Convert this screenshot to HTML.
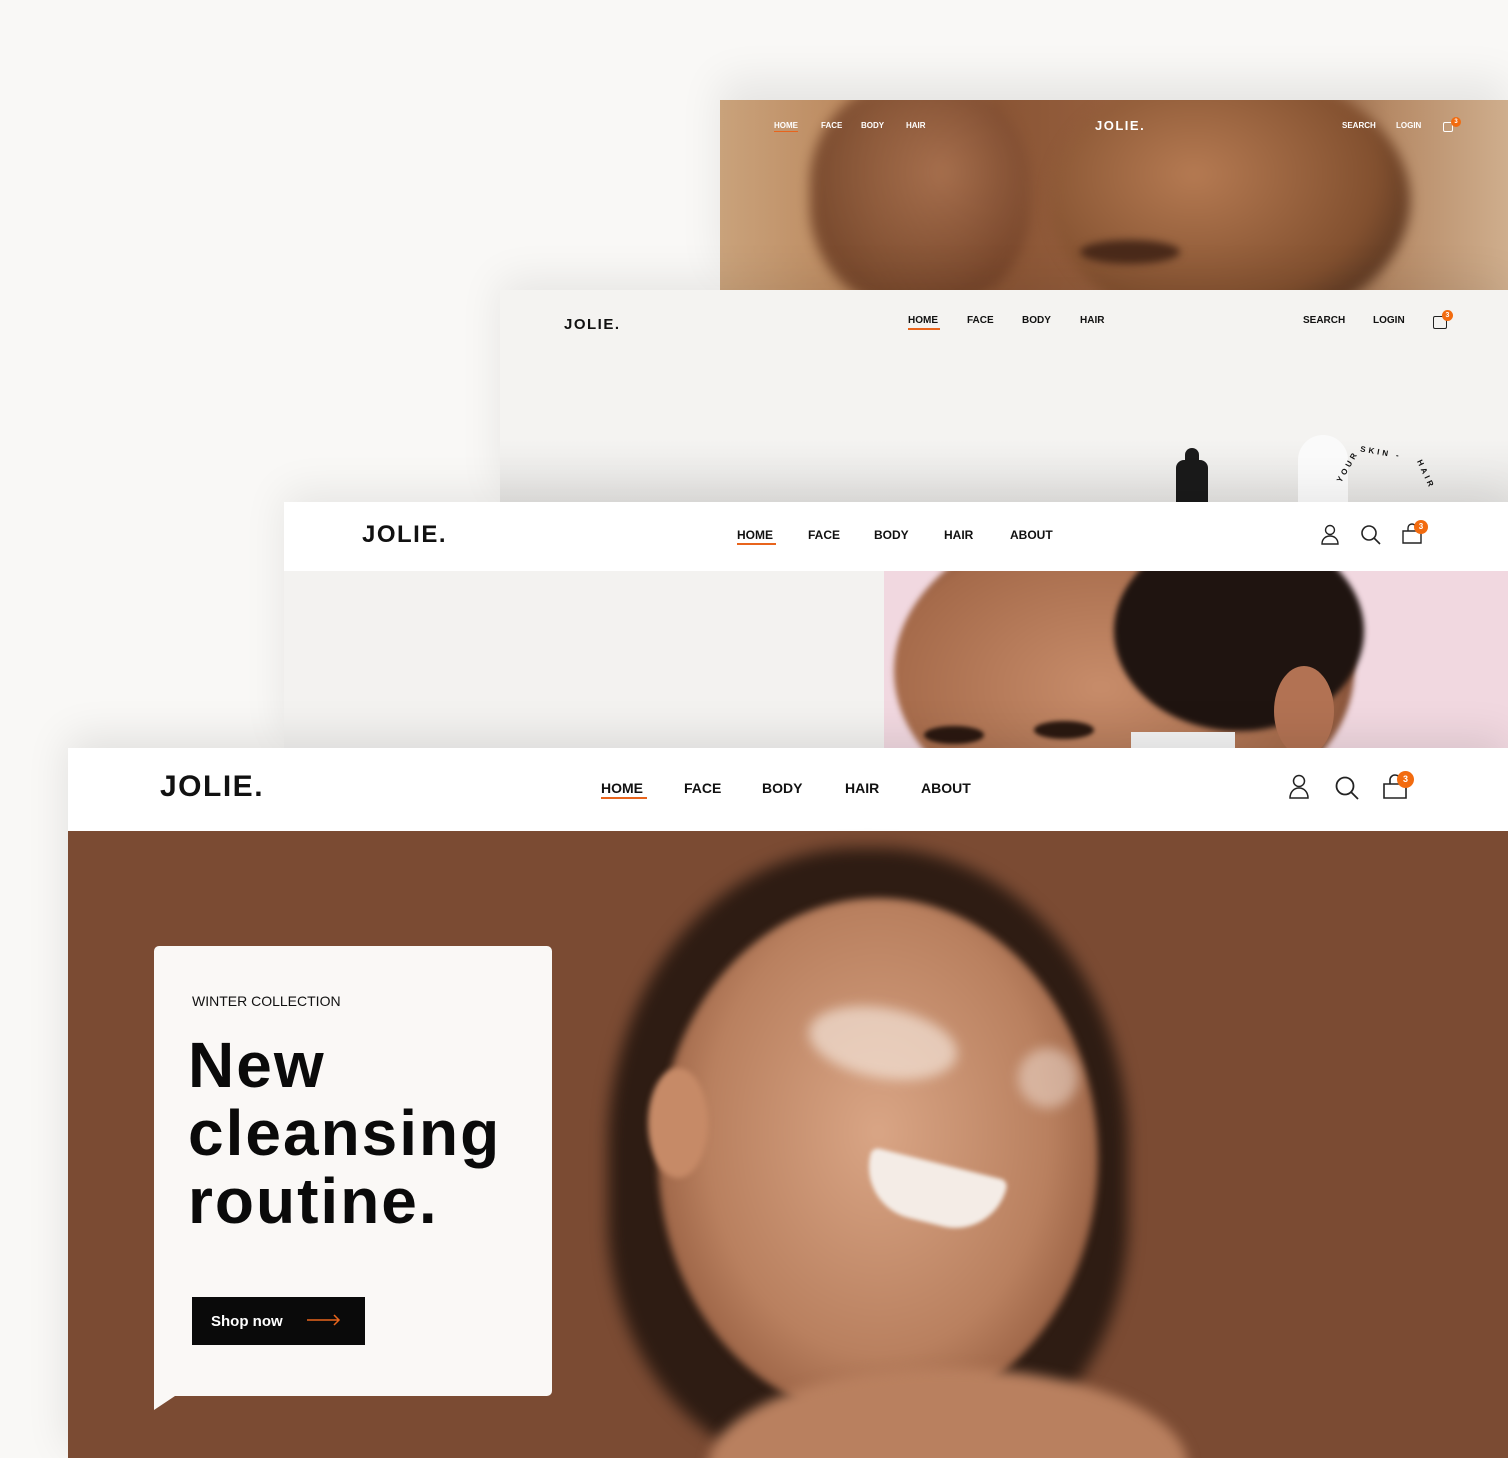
<!DOCTYPE html>
<html><head><meta charset="utf-8"><style>
*{margin:0;padding:0;box-sizing:border-box}
html,body{width:1508px;height:1458px;overflow:hidden}
body{background:#f9f8f6;position:relative;font-family:"Liberation Sans",sans-serif;color:#111}
.abs{position:absolute}
.logo{font-weight:700;letter-spacing:1.5px}
.ul{position:absolute;height:2px;background:#e8641c}
.badge{position:absolute;border-radius:50%;background:#f26b0f;color:#fff;font-weight:700;text-align:center}
</style></head><body>

<!-- layer 1 -->
<div class="abs" style="left:720px;top:100px;width:788px;height:190px;overflow:hidden;box-shadow:0 -20px 40px rgba(0,0,0,.08);background:linear-gradient(90deg,#c9a27b 0%,#b98459 20%,#8a5535 35%,#9a6240 55%,#7a4a2e 70%,#b68a66 85%,#cfae8d 100%)">
  <div class="abs" style="left:90px;top:-20px;width:220px;height:230px;border-radius:45%;background:radial-gradient(ellipse at 60% 40%,#a8704f,#6a3b22 70%);opacity:.8;filter:blur(6px)"></div>
  <div class="abs" style="left:330px;top:-30px;width:360px;height:260px;border-radius:50%;background:radial-gradient(ellipse at 40% 40%,#b57a52,#82502f 60%,#3a2418 90%);filter:blur(6px)"></div>
  <div class="abs" style="left:360px;top:140px;width:100px;height:24px;border-radius:50%;background:#4a2a1a;filter:blur(4px)"></div>
  <span class="abs" style="left:54px;top:21px;font-size:8px;color:#fff;font-weight:700">HOME</span>
  <div class="ul" style="left:54px;top:31px;width:24px;height:1px"></div>
  <span class="abs" style="left:101px;top:21px;font-size:8px;color:#fff;font-weight:700">FACE</span>
  <span class="abs" style="left:141px;top:21px;font-size:8px;color:#fff;font-weight:700">BODY</span>
  <span class="abs" style="left:186px;top:21px;font-size:8px;color:#fff;font-weight:700">HAIR</span>
  <span class="abs logo" style="left:375px;top:18px;font-size:13px;color:#fff">JOLIE.</span>
  <span class="abs" style="left:622px;top:21px;font-size:8px;color:#fff;font-weight:700">SEARCH</span>
  <span class="abs" style="left:676px;top:21px;font-size:8px;color:#fff;font-weight:700">LOGIN</span>
  <div class="abs" style="left:723px;top:22px;width:10px;height:10px;border:1px solid #fff;border-radius:2px"></div>
  <div class="badge" style="left:731px;top:17px;width:10px;height:10px;font-size:6px;line-height:10px">3</div>
</div>

<!-- layer 2 -->
<div class="abs" style="left:500px;top:290px;width:1008px;height:212px;background:#f4f3f1;box-shadow:0 -10px 40px rgba(0,0,0,.08);overflow:hidden">
  <span class="abs logo" style="left:64px;top:26px;font-size:15px">JOLIE.</span>
  <span class="abs" style="left:408px;top:25px;font-size:10px;font-weight:700">HOME</span>
  <div class="ul" style="left:408px;top:38px;width:32px"></div>
  <span class="abs" style="left:467px;top:25px;font-size:10px;font-weight:700">FACE</span>
  <span class="abs" style="left:522px;top:25px;font-size:10px;font-weight:700">BODY</span>
  <span class="abs" style="left:580px;top:25px;font-size:10px;font-weight:700">HAIR</span>
  <span class="abs" style="left:803px;top:25px;font-size:10px;font-weight:700">SEARCH</span>
  <span class="abs" style="left:873px;top:25px;font-size:10px;font-weight:700">LOGIN</span>
  <div class="abs" style="left:933px;top:26px;width:14px;height:13px;border:1.3px solid #222;border-radius:2px"></div>
  <div class="badge" style="left:942px;top:20px;width:11px;height:11px;font-size:7px;line-height:11px">3</div>
  <div class="abs" style="left:0;top:150px;width:1008px;height:62px;background:linear-gradient(#f4f3f1,#e4e3e1)"></div>
  <div class="abs" style="left:685px;top:158px;width:14px;height:14px;border-radius:7px 7px 0 0;background:#1a1a1a"></div>
  <div class="abs" style="left:676px;top:170px;width:32px;height:42px;border-radius:8px 8px 0 0;background:#1a1a1a"></div>
  <div class="abs" style="left:798px;top:145px;width:50px;height:67px;border-radius:25px 25px 0 0;background:#fafafa"></div>
  <span class="abs" style="left:860px;top:158px;font-size:8px;font-weight:700;letter-spacing:3px;transform:rotate(10deg)">SKIN -</span>
  <span class="abs" style="left:830px;top:172px;font-size:8px;font-weight:700;letter-spacing:3px;transform:rotate(-60deg)">YOUR</span>
  <span class="abs" style="left:910px;top:180px;font-size:8px;font-weight:700;letter-spacing:3px;transform:rotate(65deg)">HAIR</span>
</div>

<!-- layer 3 -->
<div class="abs" style="left:284px;top:502px;width:1224px;height:246px;background:#f3f2f0;box-shadow:0 -10px 40px rgba(0,0,0,.08);overflow:hidden">
  <div class="abs" style="left:0;top:0;width:1224px;height:69px;background:#fff"></div>
  <span class="abs logo" style="left:78px;top:19px;font-size:24px">JOLIE.</span>
  <span class="abs" style="left:453px;top:26px;font-size:12px;font-weight:700">HOME</span>
  <div class="ul" style="left:453px;top:41px;width:39px"></div>
  <span class="abs" style="left:524px;top:26px;font-size:12px;font-weight:700">FACE</span>
  <span class="abs" style="left:590px;top:26px;font-size:12px;font-weight:700">BODY</span>
  <span class="abs" style="left:660px;top:26px;font-size:12px;font-weight:700">HAIR</span>
  <span class="abs" style="left:726px;top:26px;font-size:12px;font-weight:700">ABOUT</span>
  <svg class="abs" style="left:1036px;top:22px" width="20" height="22" viewBox="0 0 20 22" fill="none" stroke="#222" stroke-width="1.4"><circle cx="10" cy="6" r="4.5"/><path d="M2 20c0-5 3.5-8 8-8s8 3 8 8z"/></svg>
  <svg class="abs" style="left:1076px;top:22px" width="22" height="22" viewBox="0 0 22 22" fill="none" stroke="#222" stroke-width="1.6"><circle cx="9" cy="9" r="7"/><path d="M14 14l6 6"/></svg>
  <svg class="abs" style="left:1117px;top:21px" width="22" height="22" viewBox="0 0 22 22" fill="none" stroke="#222" stroke-width="1.4"><path d="M2 8h18v12H2z"/><path d="M7 8V5a4 4 0 018 0v3"/></svg>
  <div class="badge" style="left:1130px;top:18px;width:14px;height:14px;font-size:8px;line-height:14px">3</div>
  <div class="abs" style="left:600px;top:69px;width:624px;height:177px;background:#f1d8e0;overflow:hidden">
    <div class="abs" style="left:10px;top:-60px;width:460px;height:320px;border-radius:50%;background:radial-gradient(ellipse at 45% 55%,#c78c6a,#a56a4a 60%,#5a3020 85%);filter:blur(3px)"></div>
    <div class="abs" style="left:230px;top:-40px;width:250px;height:200px;border-radius:50%;background:#1f1410;filter:blur(3px)"></div>
    <div class="abs" style="left:390px;top:95px;width:60px;height:90px;border-radius:50%;background:#b27253"></div>
    <div class="abs" style="left:40px;top:155px;width:60px;height:18px;border-radius:50%;background:#2a1810;filter:blur(2px)"></div>
    <div class="abs" style="left:150px;top:150px;width:60px;height:18px;border-radius:50%;background:#2a1810;filter:blur(2px)"></div>
    <div class="abs" style="left:247px;top:161px;width:104px;height:20px;background:#f4f4f4"></div>
  </div>
</div>

<!-- layer 4 -->
<div class="abs" style="left:68px;top:748px;width:1440px;height:710px;background:#7b4b33;box-shadow:0 -10px 40px rgba(0,0,0,.1);overflow:hidden">
  <div class="abs" style="left:0;top:0;width:1440px;height:83px;background:#fff"></div>
  <span class="abs logo" style="left:92px;top:22px;font-size:30px">JOLIE.</span>
  <span class="abs" style="left:533px;top:32px;font-size:14px;font-weight:700">HOME</span>
  <div class="ul" style="left:533px;top:49px;width:46px"></div>
  <span class="abs" style="left:616px;top:32px;font-size:14px;font-weight:700">FACE</span>
  <span class="abs" style="left:694px;top:32px;font-size:14px;font-weight:700">BODY</span>
  <span class="abs" style="left:777px;top:32px;font-size:14px;font-weight:700">HAIR</span>
  <span class="abs" style="left:853px;top:32px;font-size:14px;font-weight:700">ABOUT</span>
  <svg class="abs" style="left:1220px;top:26px" width="22" height="26" viewBox="0 0 22 26" fill="none" stroke="#222" stroke-width="1.5"><circle cx="11" cy="7" r="5.5"/><path d="M2 24c0-6 4-10 9-10s9 4 9 10z"/></svg>
  <svg class="abs" style="left:1266px;top:27px" width="26" height="26" viewBox="0 0 26 26" fill="none" stroke="#222" stroke-width="1.8"><circle cx="11" cy="11" r="8.5"/><path d="M17 17l7 7"/></svg>
  <svg class="abs" style="left:1314px;top:26px" width="26" height="26" viewBox="0 0 26 26" fill="none" stroke="#222" stroke-width="1.6"><path d="M2 10h22v14H2z"/><path d="M8 10V6a5 5 0 0110 0v4"/></svg>
  <div class="badge" style="left:1329px;top:23px;width:17px;height:17px;font-size:9px;line-height:17px">3</div>
  <!-- hero face -->
  <div class="abs" style="left:540px;top:100px;width:520px;height:620px;border-radius:48% 48% 40% 40%;background:#2e1c13;filter:blur(8px)"></div>
  <div class="abs" style="left:590px;top:150px;width:440px;height:520px;border-radius:50%;background:radial-gradient(ellipse at 50% 45%,#d9a585,#b9805f 55%,#8a5236 85%);filter:blur(4px)"></div>
  <div class="abs" style="left:740px;top:260px;width:150px;height:70px;border-radius:50%;background:rgba(250,240,232,.6);transform:rotate(10deg);filter:blur(6px)"></div>
  <div class="abs" style="left:950px;top:300px;width:60px;height:60px;border-radius:50%;background:rgba(250,240,232,.45);filter:blur(6px)"></div>
  <div class="abs" style="left:795px;top:415px;width:140px;height:60px;border-radius:10px 10px 70px 70px;background:#f4ece6;transform:rotate(14deg);filter:blur(2px)"></div>
  <div class="abs" style="left:580px;top:320px;width:60px;height:110px;border-radius:50%;background:#c68a67;filter:blur(3px)"></div>
  <div class="abs" style="left:640px;top:620px;width:480px;height:200px;border-radius:50%;background:#b9805f;filter:blur(6px)"></div>
</div>

<!-- card -->
<div class="abs" style="left:154px;top:946px;width:398px;height:450px;background:#faf8f6;border-radius:5px">
  <div class="abs" style="left:38px;top:47px;font-size:14px;color:#111">WINTER COLLECTION</div>
  <div class="abs" style="left:34px;top:85px;font-size:64px;font-weight:700;line-height:68px;letter-spacing:2px;color:#0a0a0a;white-space:nowrap">New<br>cleansing<br>routine.</div>
  <div class="abs" style="left:38px;top:351px;width:173px;height:48px;background:#0a0a0a;color:#fff;font-size:15px;font-weight:700;padding:16px 0 0 19px">Shop now
    <svg class="abs" style="left:115px;top:17px" width="34" height="12" viewBox="0 0 34 12" fill="none" stroke="#e8641c" stroke-width="1.5"><path d="M0 6h32M27 1l5 5-5 5"/></svg>
  </div>
</div>
<div class="abs" style="left:154px;top:1390px;width:0;height:0;border-top:20px solid #faf8f6;border-right:30px solid transparent"></div>
</body></html>
